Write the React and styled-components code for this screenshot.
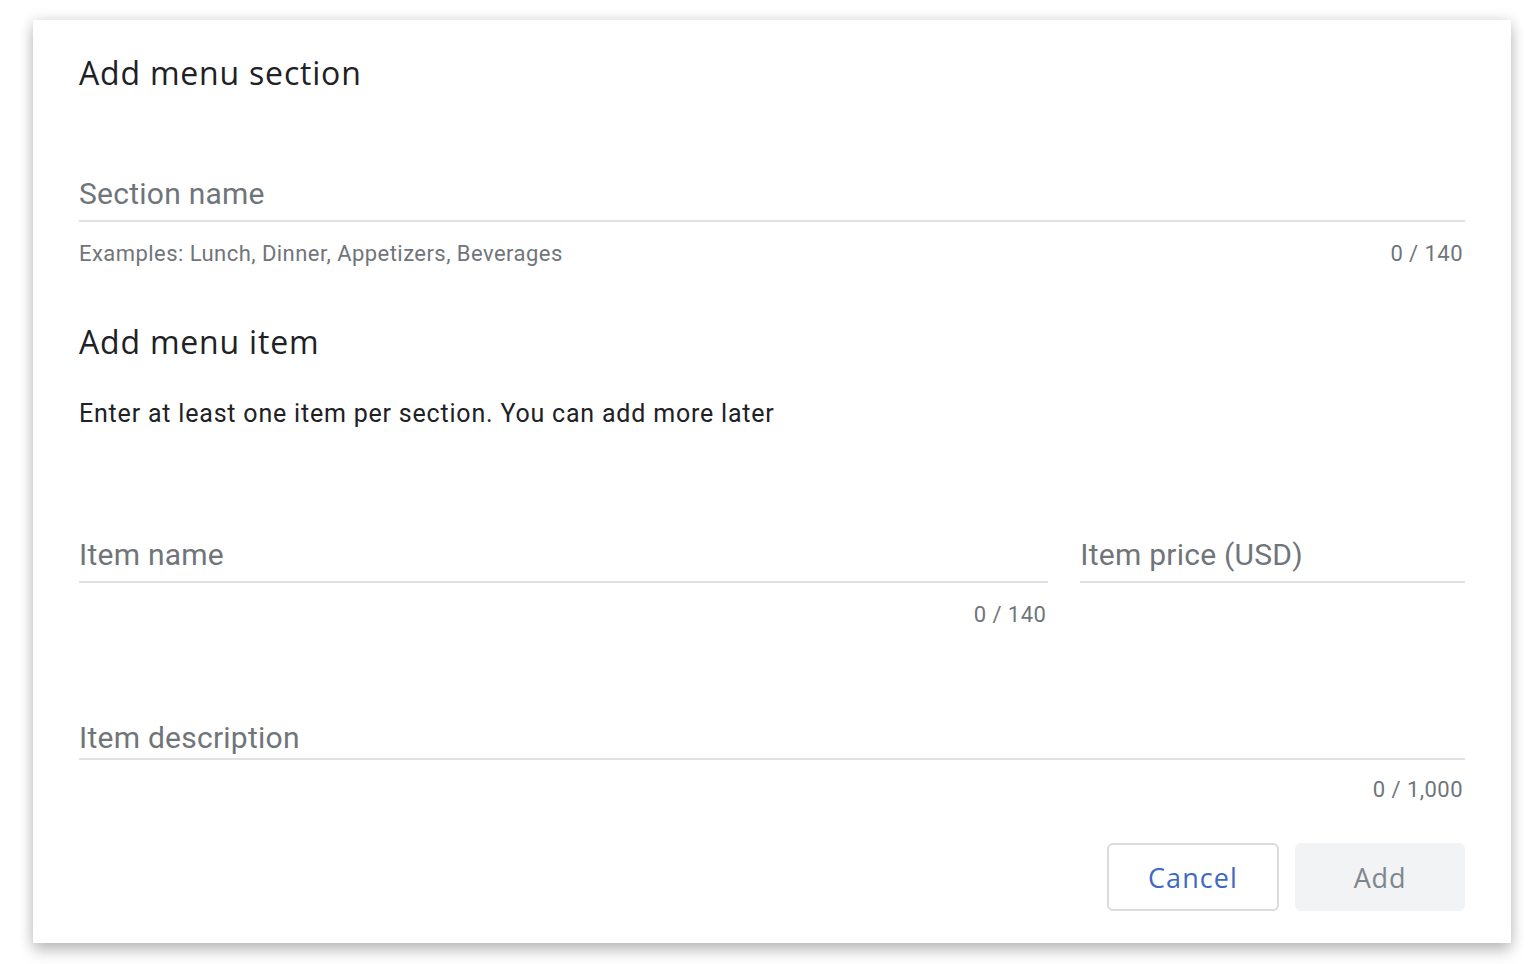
import React from "react";
import styled, { createGlobalStyle } from "styled-components";

const Global = createGlobalStyle`
  html, body { margin: 0; padding: 0; background: #ffffff; }
  body { font-family: Roboto, "Liberation Sans", sans-serif; }
`;

const Stage = styled.div`
  padding: 20px 25px 21px 33px;
`;

const Card = styled.div`
  box-sizing: border-box;
  width: 1478px;
  height: 923px;
  background: #fff;
  padding: 33px 46px 32px 46px;
  display: flex;
  flex-direction: column;
  box-shadow: 0 8px 14px rgba(0, 0, 0, 0.22), 0 0 14px rgba(0, 0, 0, 0.12);
`;

const Title = styled.h2`
  margin: ${(p) => p.$mt || 0}px 0 0 0;
  font-family: "Open Sans", Lato, sans-serif;
  font-weight: 400;
  font-size: 32px;
  line-height: 40px;
  color: #202124;
  letter-spacing: 0.8px;
`;

const Intro = styled.p`
  margin: 36px 0 0 0;
  font-size: 25px;
  line-height: 32px;
  letter-spacing: 0.8px;
  color: #202124;
`;

const FieldRow = styled.div`
  display: flex;
  gap: 32px;
  margin-top: ${(p) => p.$mt || 0}px;
`;

const FieldCol = styled.div`
  flex: ${(p) => p.$flex || 1};
  display: flex;
  flex-direction: column;
`;

const Field = styled.div`
  border-bottom: 2px solid #dfe1e5;
  padding-bottom: ${(p) => p.$pb ?? 6}px;
  font-size: 30px;
  line-height: 40px;
  letter-spacing: 0.25px;
  color: #70757a;
`;

const Helper = styled.div`
  display: flex;
  justify-content: space-between;
  margin-top: ${(p) => p.$mt || 18}px;
  font-size: 22px;
  line-height: 28px;
  letter-spacing: 0.45px;
  color: #70757a;
  padding-right: 2px;
`;

const Counter = styled.span`
  margin-left: auto;
`;

const Actions = styled.div`
  margin-top: auto;
  display: flex;
  justify-content: flex-end;
  gap: 16px;
`;

const Button = styled.button`
  box-sizing: border-box;
  width: ${(p) => p.$w}px;
  height: 68px;
  border-radius: 6px;
  font-family: "Open Sans", Lato, sans-serif;
  font-weight: 500;
  font-size: 27px;
  letter-spacing: ${(p) => (p.$primary ? 0.8 : 1.1)}px;
  cursor: pointer;
  border: ${(p) => (p.$primary ? "none" : "2px solid #dadce0")};
  background: ${(p) => (p.$primary ? "#f1f3f4" : "#fff")};
  color: ${(p) => (p.$primary ? "#80868b" : "#3f68c4")};
`;

export default function App() {
  return (
    <>
      <Global />
      <Stage>
        <Card>
          <Title>Add menu section</Title>
          <FieldRow $mt={81}>
            <FieldCol>
              <Field>Section name</Field>
              <Helper>
                <span>Examples: Lunch, Dinner, Appetizers, Beverages</span>
                <Counter>0 / 140</Counter>
              </Helper>
            </FieldCol>
          </FieldRow>
          <Title $mt={54}>Add menu item</Title>
          <Intro>Enter at least one item per section. You can add more later</Intro>
          <FieldRow $mt={105}>
            <FieldCol $flex={970}>
              <Field>Item name</Field>
              <Helper>
                <Counter>0 / 140</Counter>
              </Helper>
            </FieldCol>
            <FieldCol $flex={385}>
              <Field>Item price (USD)</Field>
            </FieldCol>
          </FieldRow>
          <FieldRow $mt={89}>
            <FieldCol>
              <Field $pb={0}>Item description</Field>
              <Helper $mt={16}>
                <Counter>0 / 1,000</Counter>
              </Helper>
            </FieldCol>
          </FieldRow>
          <Actions>
            <Button $w={172}>Cancel</Button>
            <Button $w={170} $primary>Add</Button>
          </Actions>
        </Card>
      </Stage>
    </>
  );
}
